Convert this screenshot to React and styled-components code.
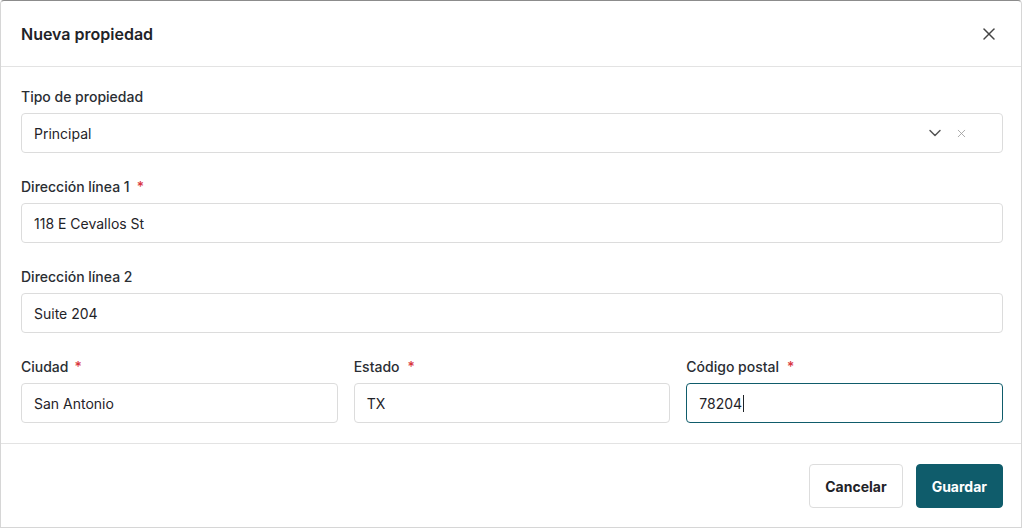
import React from "react";
import styled, { createGlobalStyle } from "styled-components";
import { X, ChevronDown } from "lucide-react";

const GlobalStyle = createGlobalStyle`
  html, body {
    margin: 0;
    padding: 0;
    background: #ffffff;
    font-family: Inter, "Noto Sans", sans-serif;
    color: #1f2328;
  }
  * { box-sizing: border-box; }
`;

const Modal = styled.div`
  width: 1022px;
  height: 528px;
  background: #fff;
  border: 1px solid #d6d6d6;
  border-top-color: #8c8c8c;
  border-radius: 4px 4px 0 0;
  display: flex;
  flex-direction: column;
  overflow: hidden;
`;

const Header = styled.div`
  height: 66px;
  flex: none;
  display: flex;
  align-items: center;
  justify-content: space-between;
  padding: 0 22px 0 20px;
  border-bottom: 1px solid #e3e3e3;
`;

const Title = styled.h2`
  margin: 0;
  font-size: 16px;
  font-weight: 600;
  color: #1f2328;
`;

const IconButton = styled.button`
  border: none;
  background: none;
  padding: 0;
  display: flex;
  color: #444;
  cursor: pointer;
`;

const Body = styled.div`
  padding: 20px 18px 20px 20px;
  display: flex;
  flex-direction: column;
  gap: 24px;
  border-bottom: 1px solid #e3e3e3;
`;

const Row = styled.div`
  display: grid;
  grid-template-columns: repeat(${(p) => p.cols || 1}, 1fr);
  gap: 16px;
`;

const Field = styled.div`
  display: flex;
  flex-direction: column;
  gap: 6px;
`;

const Label = styled.label`
  font-size: 14px;
  line-height: 20px;
  font-weight: 500;
  color: #2a2e33;
`;

const Required = styled.span`
  color: #d9363e;
  margin-left: ${(p) => p.gap || 4}px;
`;

const InputBox = styled.div`
  height: 40px;
  border: 1px solid ${(p) => (p.focused ? "#0f5c6b" : "#dcdcdc")};
  border-radius: 4px;
  display: flex;
  align-items: center;
  padding: 0 12px;
  font-size: 14px;
  color: #1f2328;
  background: #fff;
`;

const Caret = styled.span`
  display: inline-block;
  width: 1px;
  height: 17px;
  background: #1f2328;
  margin-left: 1px;
`;

const SelectValue = styled.span`
  flex: 1;
`;

const SelectIcons = styled.div`
  display: flex;
  align-items: center;
  gap: 10px;
  margin-right: 22px;
  color: #555;
`;

const ClearIcon = styled.span`
  display: flex;
  color: #9a9a9a;
`;

const Footer = styled.div`
  display: flex;
  justify-content: flex-end;
  gap: 13px;
  padding: 20px 18px 20px 20px;
`;

const Button = styled.button`
  height: 44px;
  padding: 0 15px;
  border-radius: 4px;
  font-family: Inter, "Noto Sans", sans-serif;
  font-size: 14px;
  font-weight: 700;
  cursor: pointer;
  border: 1px solid ${(p) => (p.primary ? "#0f5c6b" : "#dddddd")};
  background: ${(p) => (p.primary ? "#0f5c6b" : "#fff")};
  color: ${(p) => (p.primary ? "#fff" : "#1f2328")};
`;

function TextField({ label, required, value, focused, reqGap }) {
  return (
    <Field>
      <Label>
        {label}
        {required && <Required gap={reqGap}>*</Required>}
      </Label>
      <InputBox focused={focused}>
        {value}
        {focused && <Caret />}
      </InputBox>
    </Field>
  );
}

export default function App() {
  return (
    <>
      <GlobalStyle />
      <Modal>
        <Header>
          <Title>Nueva propiedad</Title>
          <IconButton aria-label="Cerrar">
            <X size={20} strokeWidth={1.8} />
          </IconButton>
        </Header>
        <Body>
          <Field>
            <Label>Tipo de propiedad</Label>
            <InputBox>
              <SelectValue>Principal</SelectValue>
              <SelectIcons>
                <ChevronDown size={20} strokeWidth={1.8} />
                <ClearIcon>
                  <X size={13} strokeWidth={1.5} />
                </ClearIcon>
              </SelectIcons>
            </InputBox>
          </Field>
          <TextField label="Dirección línea 1" required reqGap={7} value="118 E Cevallos St" />
          <TextField label="Dirección línea 2" value="Suite 204" />
          <Row cols={3}>
            <TextField label="Ciudad" required reqGap={6} value="San Antonio" />
            <TextField label="Estado" required reqGap={8} value="TX" />
            <TextField label="Código postal" required reqGap={8} value="78204" focused />
          </Row>
        </Body>
        <Footer>
          <Button>Cancelar</Button>
          <Button primary>Guardar</Button>
        </Footer>
      </Modal>
    </>
  );
}
